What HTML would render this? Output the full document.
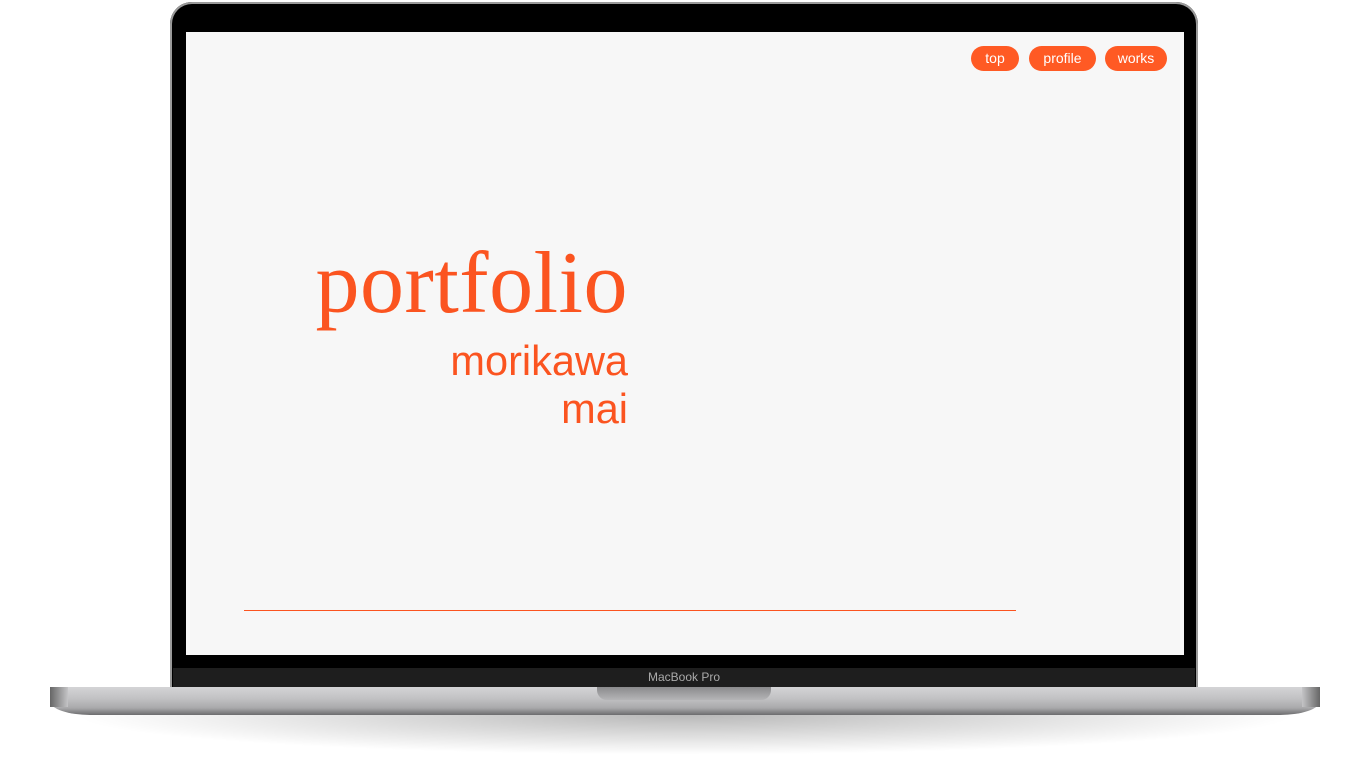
<!DOCTYPE html>
<html><head><meta charset="utf-8"><style>
*{margin:0;padding:0;box-sizing:border-box}
body{width:1370px;height:767px;background:#fff;position:relative;overflow:hidden;font-family:"Liberation Sans",sans-serif}
.shadow{position:absolute;left:70px;top:705px;width:1230px;height:50px;background:radial-gradient(ellipse at 50% 20%,rgba(0,0,0,.28),rgba(0,0,0,0) 70%)}
.lid{position:absolute;left:170px;top:2px;width:1028px;height:690px;background:#000;border-radius:22px 22px 0 0;box-shadow:0 0 0 2px #9a9a9a inset}
.lidin{position:absolute;left:173px;top:5px;width:1022px;height:686px;background:#000;border-radius:19px 19px 0 0}
.strip{position:absolute;left:173px;top:668px;width:1022px;height:20px;background:#1e1e1e}
.strip span{position:absolute;left:0;right:0;text-align:center;top:2px;color:#aaa;font-size:12px}
.screen{position:absolute;left:186px;top:32px;width:998px;height:623px;background:#f7f7f7}
.base{position:absolute;left:50px;top:687px;width:1270px;height:28px;background:linear-gradient(#d4d4d6,#c2c2c4 40%,#a9a9ab 75%,#6c6c6e);border-radius:2px 2px 40px 40px/2px 2px 14px 14px}
.base:before{content:"";position:absolute;left:0;top:0;width:18px;height:20px;background:linear-gradient(90deg,#666,#c4c4c6)}
.base:after{content:"";position:absolute;right:0;top:0;width:18px;height:20px;background:linear-gradient(270deg,#666,#c4c4c6)}
.notch{position:absolute;left:597px;top:687px;width:174px;height:13px;background:linear-gradient(#8a8a8c,#b5b5b7);border-radius:0 0 10px 10px}
.btn{position:absolute;top:46px;height:25px;border-radius:13px;background:#ff5a24;color:#fff;font-size:14px;line-height:25px;text-align:center;font-family:"Liberation Sans",sans-serif}
.o{color:#fb5420;position:absolute;white-space:nowrap}
</style></head><body>
<div class="shadow"></div>
<div class="lid"></div>
<div class="lidin"></div>
<div class="strip"><span>MacBook Pro</span></div>
<div class="screen"></div>
<div class="base"></div>
<div class="notch"></div>
<div class="btn" style="left:971px;width:48px">top</div>
<div class="btn" style="left:1029px;width:67px">profile</div>
<div class="btn" style="left:1105px;width:62px">works</div>
<div class="o" style="right:742px;top:234px;font-family:'Liberation Serif',serif;font-size:88px;line-height:100px;letter-spacing:0.5px">portfolio</div>
<div class="o" style="right:742px;top:338px;font-size:41.5px;line-height:46px">morikawa</div>
<div class="o" style="right:742px;top:386px;font-size:41.5px;line-height:46px">mai</div>
<div style="position:absolute;left:244px;top:610px;width:772px;height:1px;background:#fb5420"></div>
</body></html>
